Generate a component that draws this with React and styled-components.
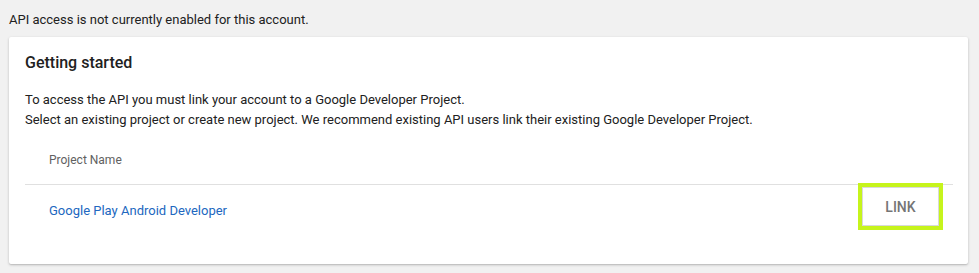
import React from "react";
import styled, { createGlobalStyle } from "styled-components";

const GlobalStyle = createGlobalStyle`
  html, body {
    margin: 0;
    padding: 0;
    background: #f1f1f1;
  }
  body {
    font-family: Roboto, "Liberation Sans", Arial, sans-serif;
    color: #212121;
  }
`;

const Page = styled.div`
  padding: 10px 11px 9px 9px;
`;

const Notice = styled.div`
  font-size: 13px;
  line-height: 20px;
  color: #212121;
  margin-bottom: 7px;
`;

const Card = styled.section`
  background: #fff;
  border-radius: 2px;
  box-shadow: 0 1px 3px rgba(0, 0, 0, 0.2), 0 1px 1px rgba(0, 0, 0, 0.08);
  padding: 16px 15px 29px 16px;
`;

const Title = styled.h2`
  margin: 0;
  font-size: 16px;
  line-height: 20px;
  font-weight: 500;
  color: #212121;
`;

const Intro = styled.p`
  margin: 17px 0 6px;
  font-size: 13px;
  line-height: 20px;
  color: #212121;
`;

const Table = styled.div`
  display: flex;
  flex-direction: column;
`;

const HeaderRow = styled.div`
  display: flex;
  align-items: center;
  height: 48px;
  padding-left: 24px;
  border-bottom: 1px solid #e0e0e0;
  font-size: 12px;
  color: #616161;
`;

const Row = styled.div`
  display: flex;
  align-items: center;
  justify-content: space-between;
  height: 50px;
  padding: 0 14px 0 24px;
`;

const ProjectLink = styled.a`
  font-size: 13px;
  color: #2167c0;
  text-decoration: none;
  cursor: pointer;
`;

const LinkButton = styled.button`
  width: 77px;
  height: 39px;
  margin-top: -7px;
  border: none;
  background: #fff;
  box-shadow: inset 0 0 0 1px #d9d9d9;
  outline: 4px solid #c6f41c;
  font-family: Roboto, "Liberation Sans", Arial, sans-serif;
  font-size: 14px;
  font-weight: 500;
  color: #757575;
  cursor: pointer;
`;

export default function App() {
  return (
    <>
      <GlobalStyle />
      <Page>
        <Notice>API access is not currently enabled for this account.</Notice>
        <Card>
          <Title>Getting started</Title>
          <Intro>
            To access the API you must link your account to a Google Developer Project.
            <br />
            Select an existing project or create new project. We recommend existing API users link their existing Google Developer Project.
          </Intro>
          <Table>
            <HeaderRow>Project Name</HeaderRow>
            <Row>
              <ProjectLink>Google Play Android Developer</ProjectLink>
              <LinkButton>LINK</LinkButton>
            </Row>
          </Table>
        </Card>
      </Page>
    </>
  );
}
